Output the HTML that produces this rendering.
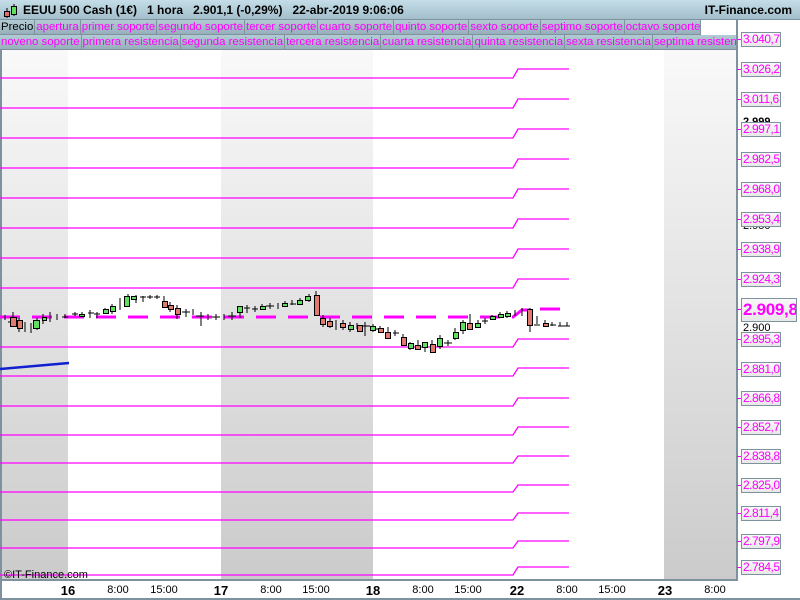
<!DOCTYPE html>
<html><head><meta charset="utf-8"><style>
*{margin:0;padding:0;box-sizing:border-box}
body{width:800px;height:600px;overflow:hidden;background:#fff;font-family:"Liberation Sans",sans-serif;position:relative}
#hdr{position:absolute;left:0;top:0;width:800px;height:20px;background:linear-gradient(#c4dde8,#a3bfcb);border-bottom:1px solid #7d929c;font-size:12px;font-weight:bold;color:#000}
.row{position:absolute;left:0;width:737px;height:15px;background:linear-gradient(#b3cbd5,#94adb8);font-size:11.4px;color:#ff00ff;white-space:nowrap;overflow:hidden}
.row span{display:inline-block;height:15px;line-height:14px;padding:0 1px;border-right:1px solid #7d929c;border-bottom:1px solid #7d929c}
.lbl{position:absolute;left:741px;width:40px;height:15px;border:1px solid #7d929c;background:linear-gradient(#f8f8f8,#e8e8e8);color:#ff00ff;font-size:12px;line-height:13px;padding-left:1px;letter-spacing:-0.5px;white-space:nowrap;overflow:hidden}
.tk{position:absolute;left:737px;width:4px;height:1px;background:#ff00ff}
.blk{position:absolute;left:743px;font-size:11px;color:#000}
.ax{position:absolute;top:584px;font-size:11px;color:#000;transform:translateX(-50%)}
.ax.b{font-weight:bold;font-size:13px;top:583px}
</style></head><body>
<div id="hdr">
<svg style="position:absolute;left:2px;top:2px" width="16" height="17"><line x1="5" y1="6" x2="5" y2="16" stroke="#000"/><rect x="2.5" y="9.5" width="5" height="5" fill="#e07070" stroke="#000"/><line x1="12" y1="2" x2="12" y2="14" stroke="#000"/><rect x="9.5" y="4.5" width="5" height="8" fill="#5fe05f" stroke="#000"/></svg>
<span style="position:absolute;left:23px;top:3px">EEUU 500 Cash (1€)&nbsp;&nbsp;&nbsp;1 hora&nbsp;&nbsp;&nbsp;2.901,1 (-0,29%)&nbsp;&nbsp;&nbsp;22-abr-2019 9:06:06</span>
<span style="position:absolute;right:8px;top:3px">IT-Finance.com</span>
</div>
<div class="row" style="top:20px;width:700px"><span style="color:#000">Precio</span><span>apertura</span><span>primer soporte</span><span>segundo soporte</span><span>tercer soporte</span><span>cuarto soporte</span><span>quinto soporte</span><span>sexto soporte</span><span>septimo soporte</span><span>octavo soporte</span></div>
<div class="row" style="top:35px"><span>noveno soporte</span><span>primera resistencia</span><span>segunda resistencia</span><span>tercera resistencia</span><span>cuarta resistencia</span><span>quinta resistencia</span><span>sexta resistencia</span><span>septima resistencia</span></div>
<div style="position:absolute;left:700px;top:20px;width:37px;height:15px;background:#fff;border-left:1px solid #7d929c"></div>
<svg style="position:absolute;left:0;top:50px" width="737" height="530">
<defs><linearGradient id="g" x1="0" y1="0" x2="0" y2="1"><stop offset="0" stop-color="#f9f9f9"/><stop offset="1" stop-color="#cbcbcb"/></linearGradient></defs>
<rect x="2" y="0" width="66" height="530" fill="url(#g)"/>
<rect x="221" y="0" width="152" height="530" fill="url(#g)"/>
<rect x="664" y="0" width="73" height="530" fill="url(#g)"/>
<rect x="0" y="0" width="2" height="530" fill="#7d929c"/>
<g stroke="#ff00ff" stroke-width="1.3" fill="none">
<path d="M0 28H513L518 19H569M0 58H513L518 49H569M0 88H513L518 79H569M0 118H513L518 109H569M0 148H513L518 139H569M0 178H513L518 169H569M0 208H513L518 199H569M0 238H513L518 229H569M0 297H513L518 289H569M0 326H513L518 318H569M0 356H513L518 348H569M0 385H513L518 377H569M0 413H513L518 406H569M0 442H513L518 435H569M0 470H513L518 463H569M0 498H513L518 491H569M0 525H513L518 517H569"/>
</g>
<path d="M0 267H513L522 260H530M540 259H560" stroke="#ff00ff" stroke-width="3" stroke-dasharray="20 12" fill="none"/>
<line x1="0" y1="319" x2="69" y2="313" stroke="#1020d0" stroke-width="2.5"/>
<g stroke="#000" stroke-width="1">
<path d="M5 265v5M13 262v14M19 268v14M25 272v10M31 273v10M37 268v12M43 264v10M50 262v10M57 264v6M65 264v4M75 262v4M82 262v4M90 260v8M97 262v6M105 258v6M112 254v10M120 248v12M128 244v10M136 245v8M143 246v6M150 245v4M157 245v4M164 246v8M170 252v10M177 255v14M186 259v8M193 259v6M201 262v14M208 264v6M216 264v6M224 264v6M232 262v8M240 256v12M247 255v8M255 256v6M262 254v6M270 253v6M278 253v6M285 251v6M292 250v5M300 248v6M309 244v8M316 241v25M323 265v12M330 268v10M336 270v10M343 270v10M350 272v10M357 273v6M365 272v14M373 274v8M380 276v6M388 277v10M395 280v6M403 284v12M410 292v8M418 290v8M425 292v10M432 290v12M440 285v14M448 290v6M455 278v12M463 270v14M470 264v16M478 270v6M485 268v6M492 265v5M500 262v6M507 261v7M515 260v6M522 258v8M530 258v24M537 266v8M545 270v6M552 272v4M560 272v4M567 272v4"/>
<path d="M8 272h6M62 267h6M72 264h6M88 263h6M94 264h6M140 247h6M147 247h6M154 247h6M182 262h8M196 266h8M212 267h8M228 266h8M244 258h6M252 259h6M266 256h8M290 254h6M348 276h6M362 276h8M376 279h8M393 283h6M444 293h8M482 271h6M534 275h6M550 275h6M558 276h6M564 276h6"/>
</g>
<g stroke="#000" stroke-width="1">
<g fill="#e07a6e"><rect x="10.5" y="267.5" width="6" height="9"/><rect x="17.5" y="270.5" width="5" height="8"/><rect x="162.5" y="251.5" width="5" height="6"/><rect x="168.5" y="255.5" width="5" height="4"/><rect x="175.5" y="258.5" width="5" height="6"/><rect x="314.5" y="245.5" width="5" height="20"/><rect x="320.5" y="268.5" width="5" height="6"/><rect x="327.5" y="271.5" width="5" height="5"/><rect x="340.5" y="273.5" width="5" height="4"/><rect x="357.5" y="275.5" width="5" height="6"/><rect x="378.5" y="278.5" width="5" height="4"/><rect x="385.5" y="282.5" width="5" height="6"/><rect x="401.5" y="287.5" width="5" height="8"/><rect x="415.5" y="295.5" width="5" height="4"/><rect x="430.5" y="294.5" width="5" height="8"/><rect x="467.5" y="273.5" width="5" height="6"/><rect x="527.5" y="259.5" width="5" height="16"/><rect x="543.5" y="273.5" width="5" height="3"/></g>
<g fill="#5ee05e"><rect x="33.5" y="270.5" width="6" height="8"/><rect x="42.5" y="267.5" width="4" height="3"/><rect x="79.5" y="264.5" width="5" height="2"/><rect x="103.5" y="259.5" width="5" height="4"/><rect x="110.5" y="256.5" width="5" height="5"/><rect x="124.5" y="246.5" width="5" height="10"/><rect x="131.5" y="246.5" width="5" height="3"/><rect x="237.5" y="256.5" width="5" height="6"/><rect x="260.5" y="256.5" width="5" height="3"/><rect x="282.5" y="253.5" width="5" height="3"/><rect x="297.5" y="250.5" width="5" height="4"/><rect x="305.5" y="246.5" width="5" height="4"/><rect x="348.5" y="275.5" width="5" height="4"/><rect x="370.5" y="276.5" width="5" height="4"/><rect x="408.5" y="293.5" width="5" height="5"/><rect x="422.5" y="292.5" width="5" height="5"/><rect x="437.5" y="288.5" width="5" height="8"/><rect x="453.5" y="282.5" width="5" height="6"/><rect x="460.5" y="272.5" width="5" height="8"/><rect x="475.5" y="273.5" width="5" height="4"/><rect x="490.5" y="266.5" width="5" height="3"/><rect x="498.5" y="264.5" width="5" height="3"/><rect x="505.5" y="263.5" width="5" height="3"/></g>
</g>
<text x="4" y="528" font-size="11" font-family="Liberation Sans" fill="#000">©IT-Finance.com</text>
</svg>
<div style="position:absolute;left:736px;top:20px;width:2px;height:561px;background:#7d929c"></div>
<div style="position:absolute;left:0;top:579px;width:738px;height:2px;background:#7d929c"></div>
<div style="position:absolute;left:0;top:580px;width:2px;height:20px;background:#7d929c"></div>
<div style="position:absolute;left:0;top:598px;width:800px;height:2px;background:#7d929c"></div>
<div class="blk" style="top:116px;font-weight:bold">2.999</div>
<div class="blk" style="top:220px">2.950</div>
<div class="blk" style="top:322px">2.900</div>
<div class="blk" style="top:426px">2.850</div>
<div class="tk" style="top:39px"></div><div class="lbl" style="top:32px">3.040,7</div>
<div class="tk" style="top:69px"></div><div class="lbl" style="top:62px">3.026,2</div>
<div class="tk" style="top:99px"></div><div class="lbl" style="top:92px">3.011,6</div>
<div class="tk" style="top:129px"></div><div class="lbl" style="top:122px">2.997,1</div>
<div class="tk" style="top:159px"></div><div class="lbl" style="top:152px">2.982,5</div>
<div class="tk" style="top:189px"></div><div class="lbl" style="top:182px">2.968,0</div>
<div class="tk" style="top:219px"></div><div class="lbl" style="top:212px">2.953,4</div>
<div class="tk" style="top:249px"></div><div class="lbl" style="top:242px">2.938,9</div>
<div class="tk" style="top:279px"></div><div class="lbl" style="top:272px">2.924,3</div>
<div class="tk" style="top:309px"></div><div class="lbl" style="top:298px;width:56px;height:24px;font-size:17px;font-weight:bold;line-height:22px;letter-spacing:-0.3px">2.909,8</div>
<div class="tk" style="top:339px"></div><div class="lbl" style="top:332px">2.895,3</div>
<div class="tk" style="top:369px"></div><div class="lbl" style="top:362px">2.881,0</div>
<div class="tk" style="top:398px"></div><div class="lbl" style="top:391px">2.866,8</div>
<div class="tk" style="top:427px"></div><div class="lbl" style="top:420px">2.852,7</div>
<div class="tk" style="top:456px"></div><div class="lbl" style="top:449px">2.838,8</div>
<div class="tk" style="top:485px"></div><div class="lbl" style="top:478px">2.825,0</div>
<div class="tk" style="top:513px"></div><div class="lbl" style="top:506px">2.811,4</div>
<div class="tk" style="top:541px"></div><div class="lbl" style="top:534px">2.797,9</div>
<div class="tk" style="top:567px"></div><div class="lbl" style="top:560px">2.784,5</div>
<div class="ax b" style="left:68px">16</div><div class="ax" style="left:118px">8:00</div><div class="ax" style="left:164px">15:00</div>
<div class="ax b" style="left:221px">17</div><div class="ax" style="left:271px">8:00</div><div class="ax" style="left:316px">15:00</div>
<div class="ax b" style="left:373px">18</div><div class="ax" style="left:423px">8:00</div><div class="ax" style="left:468px">15:00</div>
<div class="ax b" style="left:517px">22</div><div class="ax" style="left:567px">8:00</div><div class="ax" style="left:612px">15:00</div>
<div class="ax b" style="left:665px">23</div><div class="ax" style="left:715px">8:00</div>
</body></html>
